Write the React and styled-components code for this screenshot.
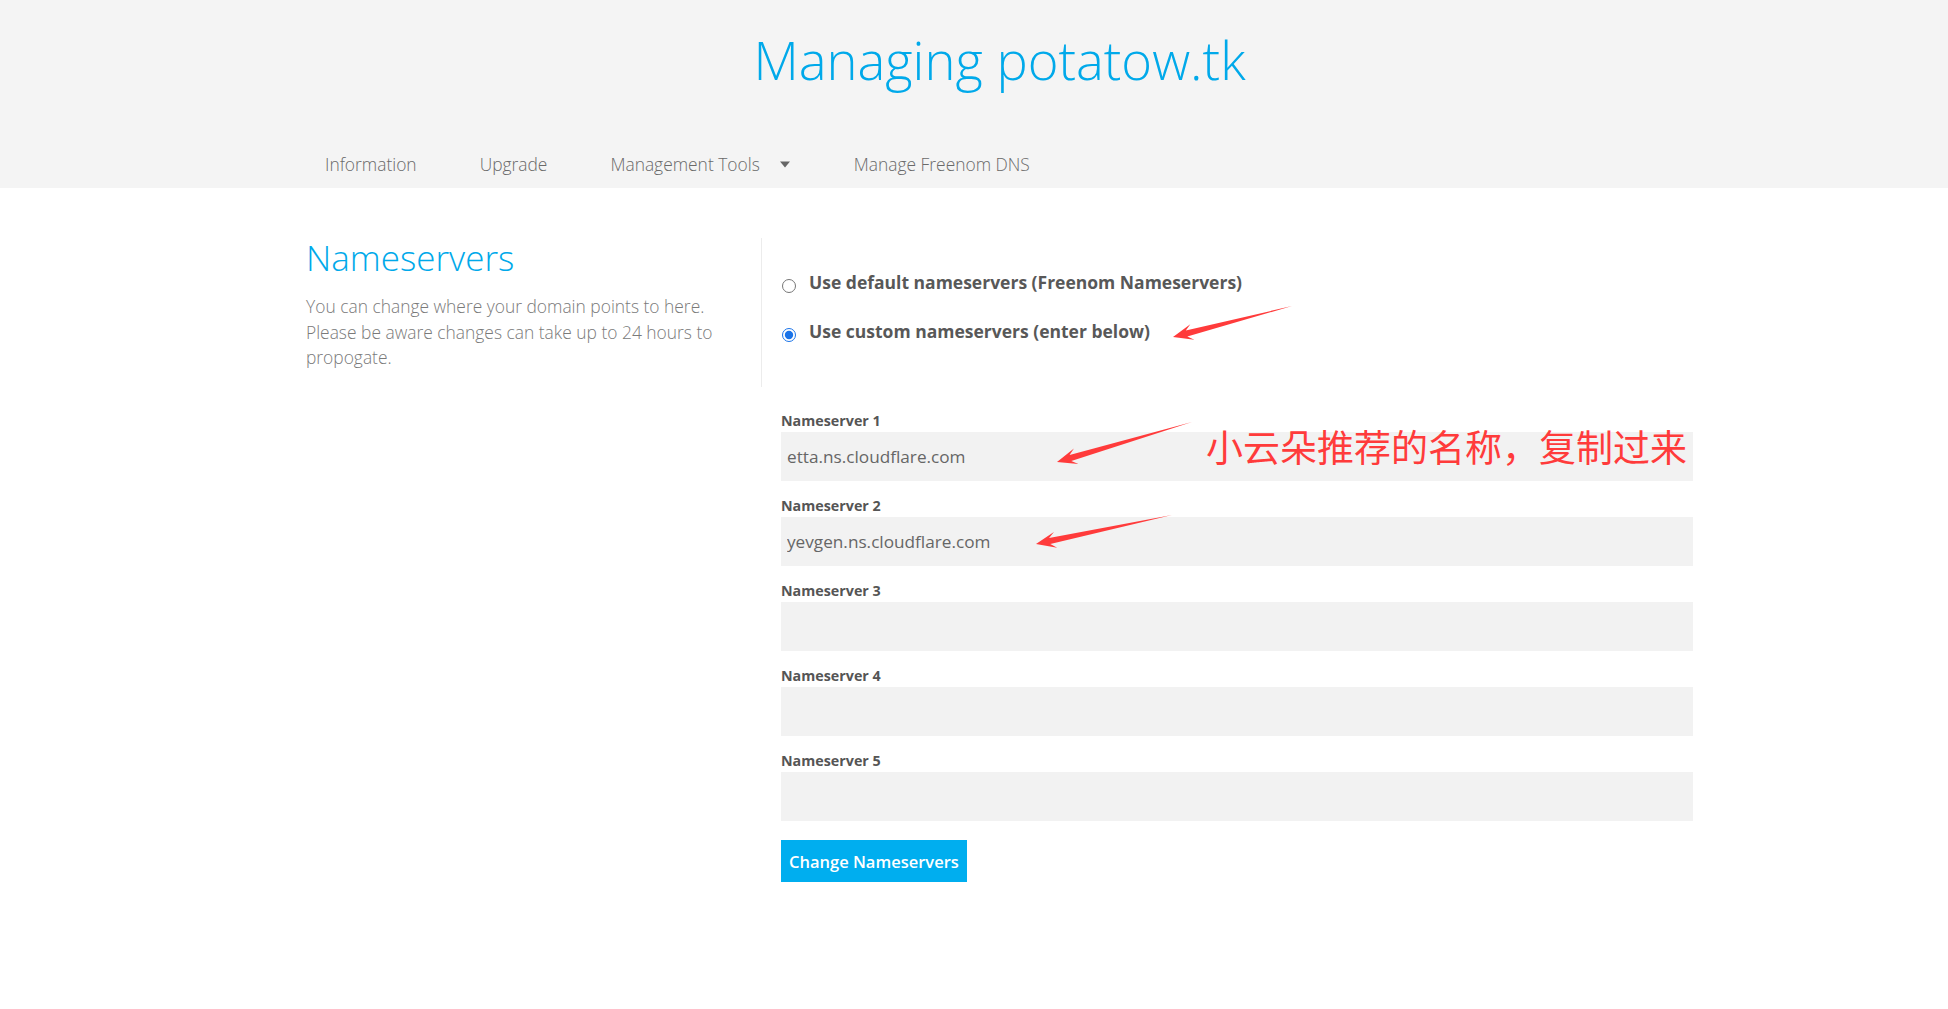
import React from 'react'
import styled, { createGlobalStyle } from 'styled-components';

const GlobalStyle = createGlobalStyle`
    html, body {
        margin: 0;
        padding: 0;
        background: #fff;
    }
    body {
        font-family: "Open Sans", "Noto Sans", sans-serif;
        color: #666;
    }
    * {
        box-sizing: border-box;
    }
`;

const fields = [
    { label: 'Nameserver 1', value: 'etta.ns.cloudflare.com' },
    { label: 'Nameserver 2', value: 'yevgen.ns.cloudflare.com' },
    { label: 'Nameserver 3', value: '' },
    { label: 'Nameserver 4', value: '' },
    { label: 'Nameserver 5', value: '' },
];

const navItems = ['Information', 'Upgrade', 'Management Tools', 'Manage Freenom DNS'];

// red annotation arrows, tail -> tip in page coordinates
const arrows = [
    { tail: [1292, 306], tip: [1173, 337] },
    { tail: [1192, 422], tip: [1057, 462] },
    { tail: [1172, 515], tip: [1036, 544] },
];

function arrowPoints({ tail, tip }) {
    const dx = tip[0] - tail[0];
    const dy = tip[1] - tail[1];
    const len = Math.sqrt(dx * dx + dy * dy);
    const ux = dx / len, uy = dy / len;
    const nx = -uy, ny = ux;
    const neck = [tip[0] - ux * 14, tip[1] - uy * 14];
    const wing = [tip[0] - ux * 20, tip[1] - uy * 20];
    const pts = [
        tail,
        [neck[0] + nx * 3, neck[1] + ny * 3],
        [wing[0] + nx * 8, wing[1] + ny * 8],
        tip,
        [wing[0] - nx * 8, wing[1] - ny * 8],
        [neck[0] - nx * 3, neck[1] - ny * 3],
    ];
    return pts.map(p => p[0].toFixed(1) + ',' + p[1].toFixed(1)).join(' ');
}

function Caret() {
    return (
        <svg width="12" height="7" viewBox="0 0 12 7">
            <path d="M1 0.5 L11 0.5 L6 6.5 Z" fill="#666" />
        </svg>
    )
}

function App() {
    return (
        <Page>
            <GlobalStyle />
            <Header>
                <Container>
                    <Title>Managing potatow.tk</Title>
                    <Nav>
                        {navItems.map(item => (
                            <NavItem key={item}>
                                {item}
                                {item === 'Management Tools' && <Caret />}
                            </NavItem>
                        ))}
                    </Nav>
                </Container>
            </Header>

            <Container>
                <Section>
                    <Intro>
                        <h2>Nameservers</h2>
                        <p>
                            You can change where your domain points to here.
                            Please be aware changes can take up to 24 hours to propogate.
                        </p>
                    </Intro>
                    <Choices>
                        <RadioRow>
                            <input type="radio" name="nsgroup" />
                            <span>Use default nameservers (Freenom Nameservers)</span>
                        </RadioRow>
                        <RadioRow>
                            <input type="radio" name="nsgroup" defaultChecked />
                            <span>Use custom nameservers (enter below)</span>
                        </RadioRow>
                    </Choices>
                    <div />
                    <Form>
                        {fields.map(f => (
                            <Field key={f.label}>
                                <label>{f.label}</label>
                                <Input type="text" defaultValue={f.value} />
                            </Field>
                        ))}
                        <Button>Change Nameservers</Button>
                    </Form>
                </Section>
            </Container>

            <Overlay width="1948" height="1009" viewBox="0 0 1948 1009">
                {arrows.map((a, i) => (
                    <polygon key={i} points={arrowPoints(a)} fill="#ff3b3b" />
                ))}
            </Overlay>
            <Note>小云朵推荐的名称，复制过来</Note>
        </Page>
    )
}

const Page = styled.div`
    position: relative;
    min-height: 1009px;
`;

const Header = styled.div`
    background: #f4f4f4;
    height: 188px;
`;

const Container = styled.div`
    width: 1387px;
    margin-left: 306px;
`;

const Title = styled.h1`
    margin: 0;
    padding-top: 24px;
    text-align: center;
    font-weight: 300;
    font-size: 52.5px;
    line-height: 72px;
    color: #00a9ea;
`;

const Nav = styled.div`
    display: flex;
    align-items: center;
    gap: 63px;
    margin-top: 55px;
    padding-left: 19px;
`;

const NavItem = styled.div`
    display: flex;
    align-items: center;
    gap: 19px;
    font-size: 17.4px;
    font-weight: 300;
    line-height: 26px;
    color: #6a6a6a;
`;

const Section = styled.div`
    display: grid;
    grid-template-columns: 455px 932px;
    padding-top: 50px;
`;

const Intro = styled.div`
    h2 {
        margin: 0;
        font-size: 35px;
        font-weight: 300;
        line-height: 40px;
        color: #00a9ea;
    }
    p {
        margin: 16px 0 0;
        font-size: 17.4px;
        font-weight: 300;
        line-height: 25.5px;
        color: #7a7a7a;
        max-width: 430px;
    }
`;

const Choices = styled.div`
    border-left: 1px solid #ececec;
    padding: 32px 0 44px 20px;
    display: flex;
    flex-direction: column;
    gap: 25px;
`;

const RadioRow = styled.label`
    display: flex;
    align-items: center;
    gap: 13px;
    font-size: 17.5px;
    font-weight: 700;
    line-height: 24px;
    color: #585858;
    input {
        margin: 8px 0 0 0;
        width: 14px;
        height: 14px;
        accent-color: #1a73e8;
    }
`;

const Form = styled.div`
    padding: 24px 0 0 20px;
`;

const Field = styled.div`
    margin-bottom: 15px;
    label {
        display: block;
        font-size: 14.3px;
        font-weight: 700;
        line-height: 20px;
        color: #555;
        margin-bottom: 1px;
    }
`;

const Input = styled.input`
    display: block;
    width: 912px;
    height: 49px;
    border: none;
    outline: none;
    background: #f2f2f2;
    padding: 0 6px;
    font-family: "Open Sans", sans-serif;
    font-size: 17.2px;
    color: #666;
`;

const Button = styled.button`
    margin-top: 4px;
    height: 42px;
    padding: 0 8px;
    border: none;
    background: #00aeef;
    color: #fff;
    font-family: "Open Sans", sans-serif;
    font-size: 16.5px;
    font-weight: 600;
`;

const Overlay = styled.svg`
    position: absolute;
    left: 0;
    top: 0;
    pointer-events: none;
`;

const Note = styled.div`
    position: absolute;
    left: 1206px;
    top: 423px;
    font-family: "Noto Sans CJK SC", sans-serif;
    font-size: 37px;
    line-height: 46px;
    color: #ff3b3b;
    white-space: nowrap;
`;

export default App;
